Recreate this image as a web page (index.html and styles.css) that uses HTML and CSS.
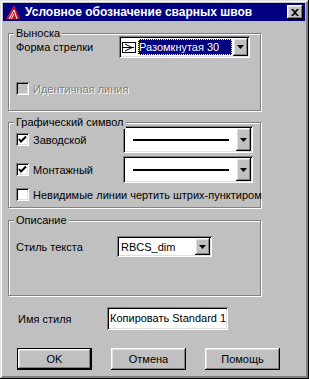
FILE: index.html
```html
<!DOCTYPE html>
<html>
<head>
  <title>Условное обозначение сварных швов</title>
  <meta charset='utf-8'>
  <link rel="stylesheet" href="styles.css">
</head>
<body>

  <div class="window">
    <div class="titlebar">
      <svg class="app-icon" width="16" height="16" viewBox="0 0 16 16">
        <polygon points="1,15 9,1 15,15" fill="#c8102e"/>
        <polyline points="4,15 9,6 12,15" fill="none" stroke="#fff" stroke-width="1"/>
        <line x1="6" y1="15" x2="9" y2="10" stroke="#fff" stroke-width="1"/>
      </svg>
      <span class="title">Условное обозначение сварных швов</span>
      <span class="close raised">
        <svg width="8" height="7" viewBox="0 0 8 7">
          <path d="M0 0h2l2 2 2-2h2L5 3.5 8 7H6L4 5 2 7H0l3-3.5z" fill="#000"/>
        </svg>
      </span>
    </div>

    <div class="content">
      <div class="group group-leader">
        <span class="legend">Выноска</span>
        <div class="row row-arrow">
          <span class="label label-arrow">Форма стрелки</span>
          <div class="combo combo-arrow sunken">
            <svg class="arrow-icon" width="14" height="11" viewBox="0 0 14 11">
              <rect x="0.5" y="0.5" width="13" height="10" fill="#fff" stroke="#000"/>
              <polyline points="3,2 10,5.5 3,9" fill="none" stroke="#000"/>
              <line x1="1" y1="5.5" x2="12" y2="5.5" stroke="#000"/>
            </svg>
            <span class="selected">Разомкнутая 30</span>
            <span class="drop raised"><svg width="7" height="4" viewBox="0 0 7 4"><polygon points="0,0 7,0 3.5,4" fill="#000"/></svg></span>
          </div>
        </div>
        <label class="check check-same disabled">
          <span class="box sunken"></span>
          <span class="check-text">Идентичная линия</span>
        </label>
      </div>

      <div class="group group-symbol">
        <span class="legend">Графический символ</span>
        <div class="row row-line">
          <label class="check label-line">
            <span class="box sunken"><svg width="9" height="9" viewBox="0 0 9 9"><polyline points="1,4 3,6.5 8,1.5" fill="none" stroke="#000" stroke-width="2"/></svg></span>
            <span class="check-text">Заводской</span>
          </label>
          <div class="combo combo-line sunken">
            <span class="line-sample"></span>
            <span class="drop raised"><svg width="7" height="4" viewBox="0 0 7 4"><polygon points="0,0 7,0 3.5,4" fill="#000"/></svg></span>
          </div>
        </div>
        <div class="row row-line">
          <label class="check label-line">
            <span class="box sunken"><svg width="9" height="9" viewBox="0 0 9 9"><polyline points="1,4 3,6.5 8,1.5" fill="none" stroke="#000" stroke-width="2"/></svg></span>
            <span class="check-text">Монтажный</span>
          </label>
          <div class="combo combo-line sunken">
            <span class="line-sample"></span>
            <span class="drop raised"><svg width="7" height="4" viewBox="0 0 7 4"><polygon points="0,0 7,0 3.5,4" fill="#000"/></svg></span>
          </div>
        </div>
        <label class="check check-hidden">
          <span class="box sunken"></span>
          <span class="check-text">Невидимые линии чертить штрих-пунктиром</span>
        </label>
      </div>

      <div class="group group-desc">
        <span class="legend">Описание</span>
        <div class="row row-style">
          <span class="label label-style">Стиль текста</span>
          <div class="combo combo-style sunken">
            <span class="combo-text">RBCS_dim</span>
            <span class="drop raised"><svg width="7" height="4" viewBox="0 0 7 4"><polygon points="0,0 7,0 3.5,4" fill="#000"/></svg></span>
          </div>
        </div>
      </div>

      <div class="name-row">
        <span class="label label-name">Имя стиля</span>
        <div class="field sunken">Копировать Standard 1</div>
      </div>

      <div class="buttons">
        <span class="button default"><span class="button-face raised">OK</span></span>
        <span class="button raised">Отмена</span>
        <span class="button raised">Помощь</span>
      </div>
    </div>
  </div>

</body>
</html>
```

FILE: styles.css
```css
* {
  box-sizing: border-box;
}
body {
  margin: 0;
  background: #c0c0c0;
  font-family: "Liberation Sans", Arial, sans-serif;
  font-size: 11px;
  color: #000;
}
.raised {
  background: #c0c0c0;
  box-shadow: inset -1px -1px #000, inset 1px 1px #fff, inset -2px -2px #808080, inset 2px 2px #dfdfdf;
}
.sunken {
  background: #fff;
  box-shadow: inset 1px 1px #808080, inset -1px -1px #fff, inset 2px 2px #000, inset -2px -2px #dfdfdf;
}
.window {
  width: 309px;
  height: 379px;
  padding: 3px 4px 0 3px;
  background: #c0c0c0;
  box-shadow: inset -1px -1px #000, inset 1px 1px #dfdfdf, inset -2px -2px #808080, inset 2px 2px #fff, inset -3px -3px #808080;
  display: flex;
  flex-direction: column;
}

/* title bar */
.titlebar {
  height: 18px;
  background: #000080;
  display: flex;
  align-items: center;
  padding: 0 2px 0 2px;
}
.app-icon {
  flex: none;
}
.title {
  color: #fff;
  font-weight: bold;
  font-size: 12px;
  margin-left: 4px;
  white-space: nowrap;
}
.close {
  margin-left: auto;
  width: 16px;
  height: 14px;
  display: flex;
  align-items: center;
  justify-content: center;
}

/* body */
.content {
  padding-left: 5px;
  display: flex;
  flex-direction: column;
}
.group {
  position: relative;
  width: 253px;
  border: 1px solid #808080;
  box-shadow: inset 1px 1px #fff, 1px 1px #fff;
  padding: 0 0 0 7px;
}
.legend {
  position: absolute;
  top: -7px;
  left: 5px;
  padding: 0 2px 0 2px;
  background: #c0c0c0;
  line-height: 13px;
}
.group-leader {
  margin-top: 12px;
  height: 78px;
  padding-top: 2px;
}
.group-symbol {
  margin-top: 11px;
  height: 86px;
  padding-top: 3px;
}
.group-desc {
  margin-top: 12px;
  height: 76px;
  padding-top: 15px;
}
.row {
  display: flex;
  align-items: center;
}
.label {
  flex: none;
}
.label-arrow {
  width: 103px;
}
.label-style {
  width: 101px;
}

/* combo boxes */
.combo {
  display: flex;
  align-items: center;
  padding: 2px;
}
.combo .drop {
  margin-left: auto;
  width: 15px;
  align-self: stretch;
  display: flex;
  align-items: center;
  justify-content: center;
  flex: none;
}
.row-arrow {
  height: 22px;
}
.combo-arrow {
  width: 131px;
  height: 22px;
}
.arrow-icon {
  margin-left: 1px;
  flex: none;
}
.selected {
  flex: 1;
  margin: 0 1px 0 2px;
  padding: 0 2px 0 1px;
  background: #000080;
  color: #fff;
  line-height: 16px;
  outline: 1px dotted #ffff80;
  outline-offset: -1px;
  white-space: nowrap;
}
.row-line {
  height: 27px;
  margin-bottom: 3px;
}
.label-line {
  width: 107px;
}
.combo-line {
  width: 130px;
  height: 27px;
}
.line-sample {
  width: 96px;
  height: 2px;
  margin-left: 8px;
  background: #000;
}
.combo-style {
  width: 95px;
  height: 21px;
}
.combo-text {
  padding-left: 2px;
}

/* checkboxes */
.check {
  display: flex;
  align-items: center;
  white-space: nowrap;
}
.box {
  flex: none;
  width: 13px;
  height: 13px;
  display: flex;
  align-items: center;
  justify-content: center;
}
.check-text {
  margin-left: 4px;
}
.check-same {
  margin-top: 24px;
}
.check-same .box {
  background: #c0c0c0;
}
.disabled .check-text {
  color: #808080;
  text-shadow: 1px 1px #fff;
}
.check-hidden {
  margin-top: 5px;
}

/* name */
.name-row {
  display: flex;
  align-items: center;
  margin-top: 11px;
  padding-left: 10px;
}
.label-name {
  width: 89px;
}
.field {
  width: 121px;
  height: 23px;
  padding: 0 3px;
  line-height: 23px;
  white-space: nowrap;
}

/* buttons */
.buttons {
  display: flex;
  margin-top: 18px;
  padding-left: 9px;
  gap: 19px;
}
.button {
  width: 75px;
  height: 22px;
  display: flex;
  align-items: center;
  justify-content: center;
}
.default {
  border: 1px solid #000;
}
.button-face {
  width: 100%;
  height: 100%;
  display: flex;
  align-items: center;
  justify-content: center;
}
```
